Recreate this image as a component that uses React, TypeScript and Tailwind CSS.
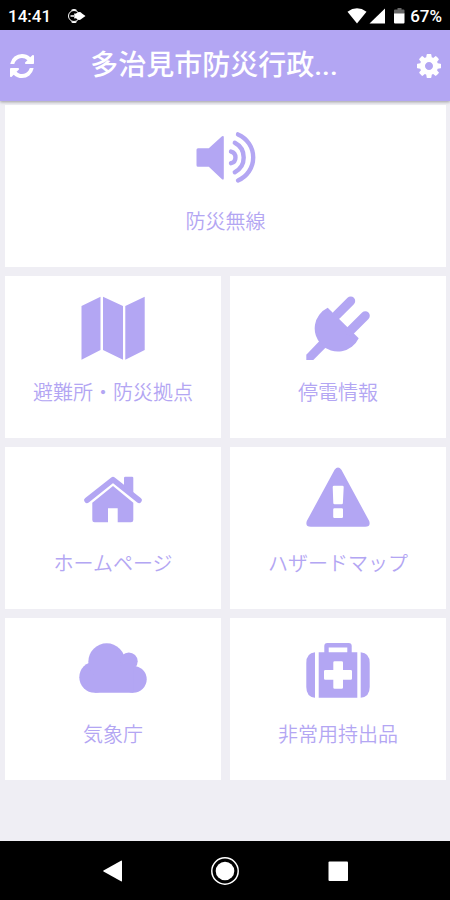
import { ReactNode } from "react";

interface IconProps {
  children: ReactNode;
}

interface MenuItem {
  label: string;
  icon: ReactNode;
  wide?: boolean;
}

function TileIcon({ children }: IconProps) {
  return (
    <svg
      className="w-[72px] h-16"
      viewBox="0 0 72 64"
      fill="currentColor"
      aria-hidden="true"
    >
      {children}
    </svg>
  );
}

const menuItems: MenuItem[] = [
  {
    label: "防災無線",
    wide: true,
    icon: (
      <TileIcon>
        <path d="M8 23.3h10.8L32 11.3q1.8-1 1.8 1v41q0 2-1.8 1L18.8 41.7H8q-1.5 0-1.5-1.5V24.8q0-1.5 1.5-1.5z" />
        <g fill="none" stroke="currentColor" strokeWidth="4.4" strokeLinecap="round">
          <path d="M41 26.6a6 6 0 0 1 0 11.6" />
          <path d="M44.8 17.8a16.6 16.6 0 0 1 0 29.4" />
          <path d="M48 9.4a25 25 0 0 1 0 46" />
        </g>
      </TileIcon>
    ),
  },
  {
    label: "避難所・防災拠点",
    icon: (
      <TileIcon>
        <path d="M4.5 10L23.5.7V54L4.5 63.7zM26 .7L46 10v53.7L26 54zM48.3 10L67.7.7V54l-19.4 9.7z" />
      </TileIcon>
    ),
  },
  {
    label: "停電情報",
    icon: (
      <TileIcon>
        <path d="M25.7 11.7L56.7 42.3A23.1 23.1 0 1 1 25.7 11.7z" />
        <path d="M17.7 44.7L4.3 58.7V64h7L24 51.3z" />
        <path
          d="M34.7 19L48.7 5M48 35l15.3-15.3"
          fill="none"
          stroke="currentColor"
          strokeWidth="9"
          strokeLinecap="round"
        />
      </TileIcon>
    ),
  },
  {
    label: "ホームページ",
    icon: (
      <TileIcon>
        <path
          d="M10 33.2L36 12.6l26 20.6"
          fill="none"
          stroke="currentColor"
          strokeWidth="5.6"
          strokeLinecap="round"
          strokeLinejoin="round"
        />
        <path d="M47 11q0-1.3 1.3-1.3H55q1.3 0 1.3 1.3v17L47 20.5z" />
        <path d="M36 19l20.3 16.8V53q0 2.3-2.3 2.3H40.7v-14H31v14H17.6q-2.3 0-2.3-2.3V35.8z" />
      </TileIcon>
    ),
  },
  {
    label: "ハザードマップ",
    icon: (
      <TileIcon>
        <path
          fillRule="evenodd"
          d="M32.6 2.8Q36-1.6 39.4 2.8L67.2 54q1.8 5.7-4 5.7H8.8q-5.8 0-4-5.7zM32 18.7q-1.3 0-1.3 1.3l.6 16q0 1.3 1.3 1.3h7q1.3 0 1.3-1.3l.8-16q0-1.3-1.3-1.3zM32.4 41.3q-1.2 0-1.2 1.2v7.3q0 1.2 1.2 1.2h7.4q1.2 0 1.2-1.2v-7.3q0-1.2-1.2-1.2z"
        />
      </TileIcon>
    ),
  },
  {
    label: "気象庁",
    icon: (
      <TileIcon>
        <circle cx="17.8" cy="39.2" r="15.5" />
        <circle cx="29.7" cy="23.7" r="18.4" />
        <circle cx="51.8" cy="23.3" r="8.9" />
        <circle cx="56.3" cy="41.3" r="13.4" />
        <path d="M17.8 28h38.5v26.7H17.8z" />
      </TileIcon>
    ),
  },
  {
    label: "非常用持出品",
    icon: (
      <TileIcon>
        <path d="M13 14.3v45.4Q4.3 59 4.3 49V25q0-10 8.7-10.7zM58.7 14.3q9 .7 9 10.7v24q0 10-9 10.7z" />
        <path
          fillRule="evenodd"
          d="M22.3 14.3V8q0-3 3-3h21.4q3 0 3 3v6.3h5.6v45.4H16.7V14.3zM26.7 9.5v4.8h18.6V9.5zM31.3 24.5v7.5h-8q-1.3 0-1.3 1.3v7.1q0 1.3 1.3 1.3h8v7.7q0 1.3 1.3 1.3h7.1q1.3 0 1.3-1.3v-7.7h7.7q1.3 0 1.3-1.3v-7.1q0-1.3-1.3-1.3H41v-7.5q0-1.2-1.3-1.2h-7.1q-1.3 0-1.3 1.2z"
        />
      </TileIcon>
    ),
  },
];

function StatusBar() {
  return (
    <div className="h-[30px] pt-0.5 px-2 bg-black text-white flex items-center justify-between font-[Roboto,sans-serif] font-medium text-[17px] leading-5">
      <div className="flex items-center gap-4">
        <span>14:41</span>
        <svg className="w-5 h-4" viewBox="0 0 20 16" aria-hidden="true">
          <circle cx="7" cy="8" r="5.5" fill="none" stroke="#fff" strokeWidth="1" />
          <path
            d="M9.5 2.6Q7 .5 4.5 2.6M9.5 13.4Q7 15.5 4.5 13.4M3.5 8h4"
            fill="none"
            stroke="#fff"
            strokeWidth="1.3"
          />
          <path
            d="M7 5.5q2 .6 3.6-1 2.6-1.2 4.4 1l3.5 2.5-3.5 2.5q-1.8 2.2-4.4 1Q9 9.9 7 10.5q1-2.5 0-5z"
            fill="#fff"
          />
        </svg>
      </div>
      <div className="flex items-center">
        <svg className="w-[63px] h-4" viewBox="0 0 63 16" fill="#fff" aria-hidden="true">
          <path d="M.5 3.7Q10-3 19.5 3.7L10 15.5z" />
          <path d="M38 .5v15H22.5z" />
          <path d="M50.5 0h4v1.5h2q1 0 1 1V6H47V2.5q0-1 1-1h2.5z" fillOpacity="0.4" />
          <path d="M47 5.5h10.5v9q0 1-1 1H48q-1 0-1-1z" />
        </svg>
        <span>67%</span>
      </div>
    </div>
  );
}

function Header() {
  return (
    <header className="relative h-[71px] px-[9px] bg-[#b3a6f3] text-white flex items-center shadow-[0_1px_3px_rgba(0,0,0,0.35)]">
      <button type="button" aria-label="更新">
        <svg className="w-[26px] h-6" viewBox="0 128 1536 1536" fill="currentColor">
          <path d="M1511 1056q0 5-1 7-64 268-268 434.5t-478 166.5q-146 0-282.5-55t-243.5-157l-129 129q-19 19-45 19t-45-19-19-45v-448q0-26 19-45t45-19h448q26 0 45 19t19 45-19 45l-137 137q71 66 161 102t187 36q134 0 250-65t186-179q11-17 53-117 8-23 30-23h192q13 0 22.5 9.5t9.5 22.5zm25-800v448q0 26-19 45t-45 19h-448q-26 0-45-19t-19-45 19-45l138-138q-148-137-349-137-134 0-250 65t-186 179q-11 17-53 117-8 23-30 23h-199q-13 0-22.5-9.5t-9.5-22.5v-7q65-268 270-434.5t480-166.5q146 0 284 55.5t245 156.5l130-129q19-19 45-19t45 19 19 45z" />
        </svg>
      </button>
      <h1 className="flex-1 pr-6 text-center text-[28px] leading-9 font-medium whitespace-nowrap font-[Roboto,'Noto_Sans_CJK_JP',sans-serif]">
        多治見市防災行政...
      </h1>
      <button type="button" aria-label="設定">
        <svg className="w-6 h-6" viewBox="0 128 1536 1536" fill="currentColor">
          <path d="M1024 896q0-106-75-181t-181-75-181 75-75 181 75 181 181 75 181-75 75-181zm512-109v222q0 12-8 23t-20 13l-185 28q-19 54-39 91 35 50 107 138 10 12 10 25t-9 23q-27 37-99 108t-94 71q-12 0-26-9l-138-108q-44 23-91 38-16 136-29 186-7 28-36 28h-222q-14 0-24.5-8.5t-11.5-21.5l-28-184q-49-16-90-37l-141 107q-10 9-25 9-14 0-25-11-126-114-165-168-7-10-7-23 0-12 8-23 15-21 51-66.5t54-70.5q-27-50-41-99l-183-27q-13-2-21-12.5t-8-23.5v-222q0-12 8-23t19-13l186-28q14-46 39-92-40-57-107-138-10-12-10-24 0-10 9-23 26-36 98.5-107.5t94.5-71.5q13 0 26 10l138 107q44-23 91-38 16-136 29-186 7-28 36-28h222q14 0 24.5 8.5t11.5 21.5l28 184q49 16 90 37l142-107q9-9 24-9 13 0 25 10 129 119 165 170 7 8 7 22 0 12-8 23-15 21-51 66.5t-54 70.5q26 50 41 98l183 28q13 2 21 12.5t8 23.5z" />
        </svg>
      </button>
    </header>
  );
}

function NavigationBar() {
  return (
    <nav className="h-[59px] bg-black text-white">
      <div className="w-3/4 h-full mx-auto grid grid-cols-3 place-items-center">
        <button type="button" aria-label="戻る">
          <svg className="w-7 h-7" viewBox="0 0 28 28" fill="currentColor">
            <path d="M23 4.2v19.6q0 1-1 .5L4.5 14.5q-.8-.5 0-1L22 3.7q1-.5 1 .5z" />
          </svg>
        </button>
        <button type="button" aria-label="ホーム">
          <svg className="w-7 h-7" viewBox="0 0 28 28" fill="currentColor">
            <circle cx="14" cy="14" r="13.2" fill="none" stroke="currentColor" strokeWidth="1.5" />
            <circle cx="14" cy="14" r="9.3" />
          </svg>
        </button>
        <button type="button" aria-label="履歴">
          <svg className="w-7 h-7" viewBox="0 0 28 28" fill="currentColor">
            <rect x="4.5" y="4.5" width="19.5" height="19.5" rx="1" />
          </svg>
        </button>
      </div>
    </nav>
  );
}

export default function App() {
  return (
    <div className="min-h-screen flex flex-col bg-[#efeef4] font-['Noto_Sans_CJK_JP',sans-serif]">
      <StatusBar />
      <Header />
      <main className="flex-1 pt-1 pb-4 pl-[5px] pr-1">
        <div className="grid grid-cols-2 gap-[9px]">
          {menuItems.map((item) => (
            <button
              key={item.label}
              type="button"
              className={`h-[162px] pt-5 bg-white text-[#b3a6f3] flex flex-col items-center gap-[18px] ${
                item.wide ? "col-span-2" : ""
              }`}
            >
              {item.icon}
              <span className="text-xl leading-7 font-[350]">{item.label}</span>
            </button>
          ))}
        </div>
      </main>
      <NavigationBar />
    </div>
  );
}
